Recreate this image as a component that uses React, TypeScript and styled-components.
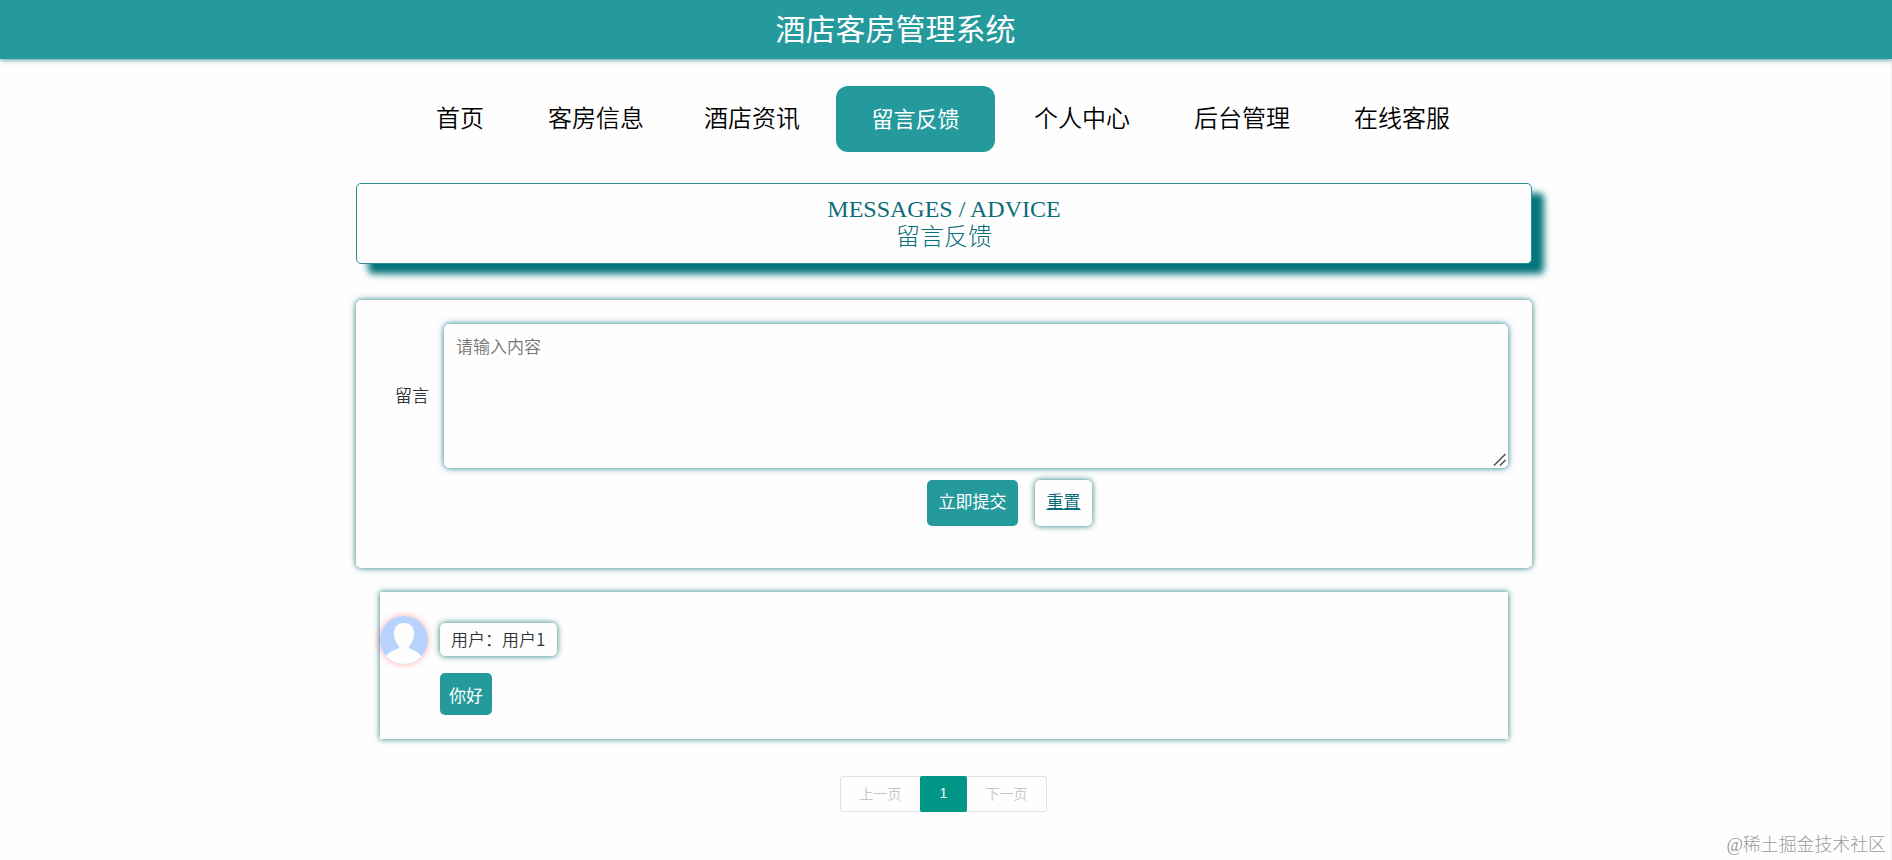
import React from "react";
import styled, { createGlobalStyle, css } from "styled-components";

const teal = "#259a9d";
const deep = "#0b6d78";
const sans = `"Noto Sans CJK SC", sans-serif`;

const GlobalStyle = createGlobalStyle`
  * { box-sizing: border-box; }
  body {
    margin: 0;
    background: #fefefe;
    font-family: ${sans};
    font-weight: 350;
    color: #333;
    overflow: hidden;
  }
  a { color: inherit; text-decoration: none; }
`;

const Page = styled.div`
  display: flex;
  flex-direction: column;
  width: 100%;
  height: 860px;
  border-right: 1px solid #f0f0f0;
`;

const Header = styled.header`
  display: flex;
  justify-content: center;
  height: 59px;
  margin-right: -1px;
  padding-right: 101px;
  flex: none;
  background: ${teal};
  box-shadow: 0 1px 5px rgba(11, 109, 120, 0.7);
`;

const SiteTitle = styled.h1`
  margin: 0;
  font-size: 30px;
  line-height: 55px;
  font-weight: 400;
  color: #fff;
`;

const Nav = styled.nav`
  display: flex;
  align-items: center;
  height: 66px;
  margin: 27px 0 0 404px;
`;

const NavLink = styled.a<{ $active?: boolean; $tight?: boolean }>`
  padding: 0 32px 4px;
  font-size: 24px;
  line-height: 62px;
  color: #000;
  white-space: nowrap;
  ${(p) => p.$tight && css`margin: 0 4px 0 -4px;`}
  ${(p) =>
    p.$active &&
    css`
      width: 159px;
      padding: 0 0 4px;
      margin-right: 7px;
      text-align: center;
      font-size: 22px;
      font-weight: 400;
      color: #fff;
      background: ${teal};
      border-radius: 12px;
    `}
`;

const Content = styled.main`
  width: 1176px;
  margin: 31px 0 0 356px;
`;

const Banner = styled.section`
  height: 81px;
  padding-top: 12px;
  border: 1px solid #2b8c94;
  border-radius: 5px;
  background: #fefefe;
  box-shadow: 12px 10px 7px #04757b;
  text-align: center;
  font-family: "Liberation Serif", ${sans};
  font-size: 24px;
  line-height: 27px;
  color: ${deep};
`;

const BannerLine = styled.div<{ $light?: boolean }>`
  font-weight: ${(p) => (p.$light ? 300 : 400)};
  ${(p) => p.$light && css`line-height: 29px;`}
`;

const glow = css`
  box-shadow: 0 0 6px rgba(10, 110, 110, 0.9);
`;

const FormPanel = styled.form`
  height: 268px;
  margin-top: 36px;
  padding: 24px;
  border-radius: 5px;
  background: #fefefe;
  ${glow}
`;

const Field = styled.div`
  position: relative;
  display: flex;
  height: 144px;
`;

const Label = styled.label`
  width: 64px;
  padding-right: 15px;
  line-height: 142px;
  text-align: right;
  font-size: 17px;
  flex: none;
`;

const MessageInput = styled.textarea`
  flex: 1;
  height: 144px;
  padding: 9px 12px;
  border: 0;
  border-radius: 5px;
  outline: 0;
  resize: none;
  background: #fefefe;
  font: 350 17px/25px ${sans};
  box-shadow: 0 0 6px rgba(11, 110, 130, 0.95);
  &::placeholder { color: #757575; }
`;

const ResizeGrip = styled.svg`
  position: absolute;
  right: 1px;
  bottom: 1px;
  width: 14px;
  height: 14px;
`;

const Actions = styled.div`
  display: flex;
  gap: 17px;
  margin: 12px 0 0 547px;
`;

const Button = styled.button<{ $plain?: boolean }>`
  width: ${(p) => (p.$plain ? 57 : 91)}px;
  height: 46px;
  padding: 0 0 4px;
  border: 0;
  border-radius: 5px;
  white-space: nowrap;
  color: ${(p) => (p.$plain ? deep : "#fff")};
  background: ${(p) => (p.$plain ? "#fefefe" : teal)};
  font: 400 17px/42px ${sans};
  ${(p) => p.$plain && glow}
  ${(p) =>
    p.$plain &&
    css`
      text-decoration: underline;
      text-underline-offset: 1px;
      text-decoration-thickness: 1px;
    `}
`;

const Comment = styled.article`
  display: flex;
  gap: 12px;
  height: 147px;
  margin: 24px 24px 0;
  padding-top: 24px;
  background: #fefefe;
  ${glow}
`;

const Avatar = styled.svg`
  width: 48px;
  height: 48px;
  border-radius: 50%;
  box-shadow: 0 0 6px rgba(255, 80, 80, 0.5);
`;

const CommentBody = styled.div`
  display: flex;
  flex-direction: column;
  align-items: flex-start;
  gap: 17px;
  padding-top: 7px;
  font-size: 17px;
`;

const UserName = styled.div`
  width: 117px;
  height: 33px;
  padding-left: 11px;
  line-height: 32px;
  white-space: nowrap;
  border-radius: 5px;
  ${glow}
`;

const Message = styled.div`
  width: 52px;
  height: 42px;
  line-height: 43px;
  text-align: center;
  font-weight: 400;
  color: #fff;
  background: ${teal};
  border-radius: 5px;
`;

const Pager = styled.div`
  display: flex;
  width: 207px;
  height: 36px;
  margin: 37px 0 0 484px;
  border: 1px solid #e2e2e2;
  border-radius: 3px;
  font-size: 14px;
  line-height: 33px;
  text-align: center;
  color: #c4c4c4;
`;

const PageLink = styled.a`
  flex: 1;
`;

const CurrentPage = styled.span`
  width: 47px;
  margin: -1px 0;
  line-height: 35px;
  font-family: "Liberation Sans", sans-serif;
  font-weight: 400;
  color: #fff;
  background: #009688;
  border-radius: 2px;
`;

const Watermark = styled.footer`
  margin: auto 5px 2px auto;
  font-size: 17.9px;
  line-height: 26px;
  font-weight: 300;
  font-family: "Liberation Serif", ${sans};
  color: #9b9b9b;
`;

export default function App() {
  return (
    <>
      <GlobalStyle />
      <Page>
        <Header>
          <SiteTitle>酒店客房管理系统</SiteTitle>
        </Header>
        <Nav>
          <NavLink href="#">首页</NavLink>
          <NavLink href="#">客房信息</NavLink>
          <NavLink href="#" $tight>酒店资讯</NavLink>
          <NavLink href="#" $active>留言反馈</NavLink>
          <NavLink href="#">个人中心</NavLink>
          <NavLink href="#">后台管理</NavLink>
          <NavLink href="#">在线客服</NavLink>
        </Nav>
        <Content>
          <Banner>
            <BannerLine>MESSAGES / ADVICE</BannerLine>
            <BannerLine $light>留言反馈</BannerLine>
          </Banner>
          <FormPanel>
            <Field>
              <Label htmlFor="message">留言</Label>
              <MessageInput id="message" placeholder="请输入内容" />
              <ResizeGrip viewBox="0 0 14 14" stroke="#555" strokeWidth="1.6">
                <path d="M1 12.500L12.500 1M7 12.500L12.500 7" />
              </ResizeGrip>
            </Field>
            <Actions>
              <Button type="button">立即提交</Button>
              <Button type="reset" $plain>重置</Button>
            </Actions>
          </FormPanel>
          <Comment>
            <Avatar viewBox="0 0 48 48">
              <rect width="48" height="48" fill="#b9d3ff" />
              <path
                d="M24 7c-6 0-10 4-10 10.500 0 6 2.500 10 5 12.500 .5 2-1 3-3 3.500C11 35 8 37 6 40V48h35v-8c-2-3-5-5-9-6.500-2-.5-3.500-1.500-3-3.500 2.500-2.500 5-6.500 5-12.500C34 11 30 7 24 7z"
                fill="#fefefe"
              />
            </Avatar>
            <CommentBody>
              <UserName>用户：用户1</UserName>
              <Message>你好</Message>
            </CommentBody>
          </Comment>
          <Pager>
            <PageLink>上一页</PageLink>
            <CurrentPage>1</CurrentPage>
            <PageLink>下一页</PageLink>
          </Pager>
        </Content>
        <Watermark>@稀土掘金技术社区</Watermark>
      </Page>
    </>
  );
}
